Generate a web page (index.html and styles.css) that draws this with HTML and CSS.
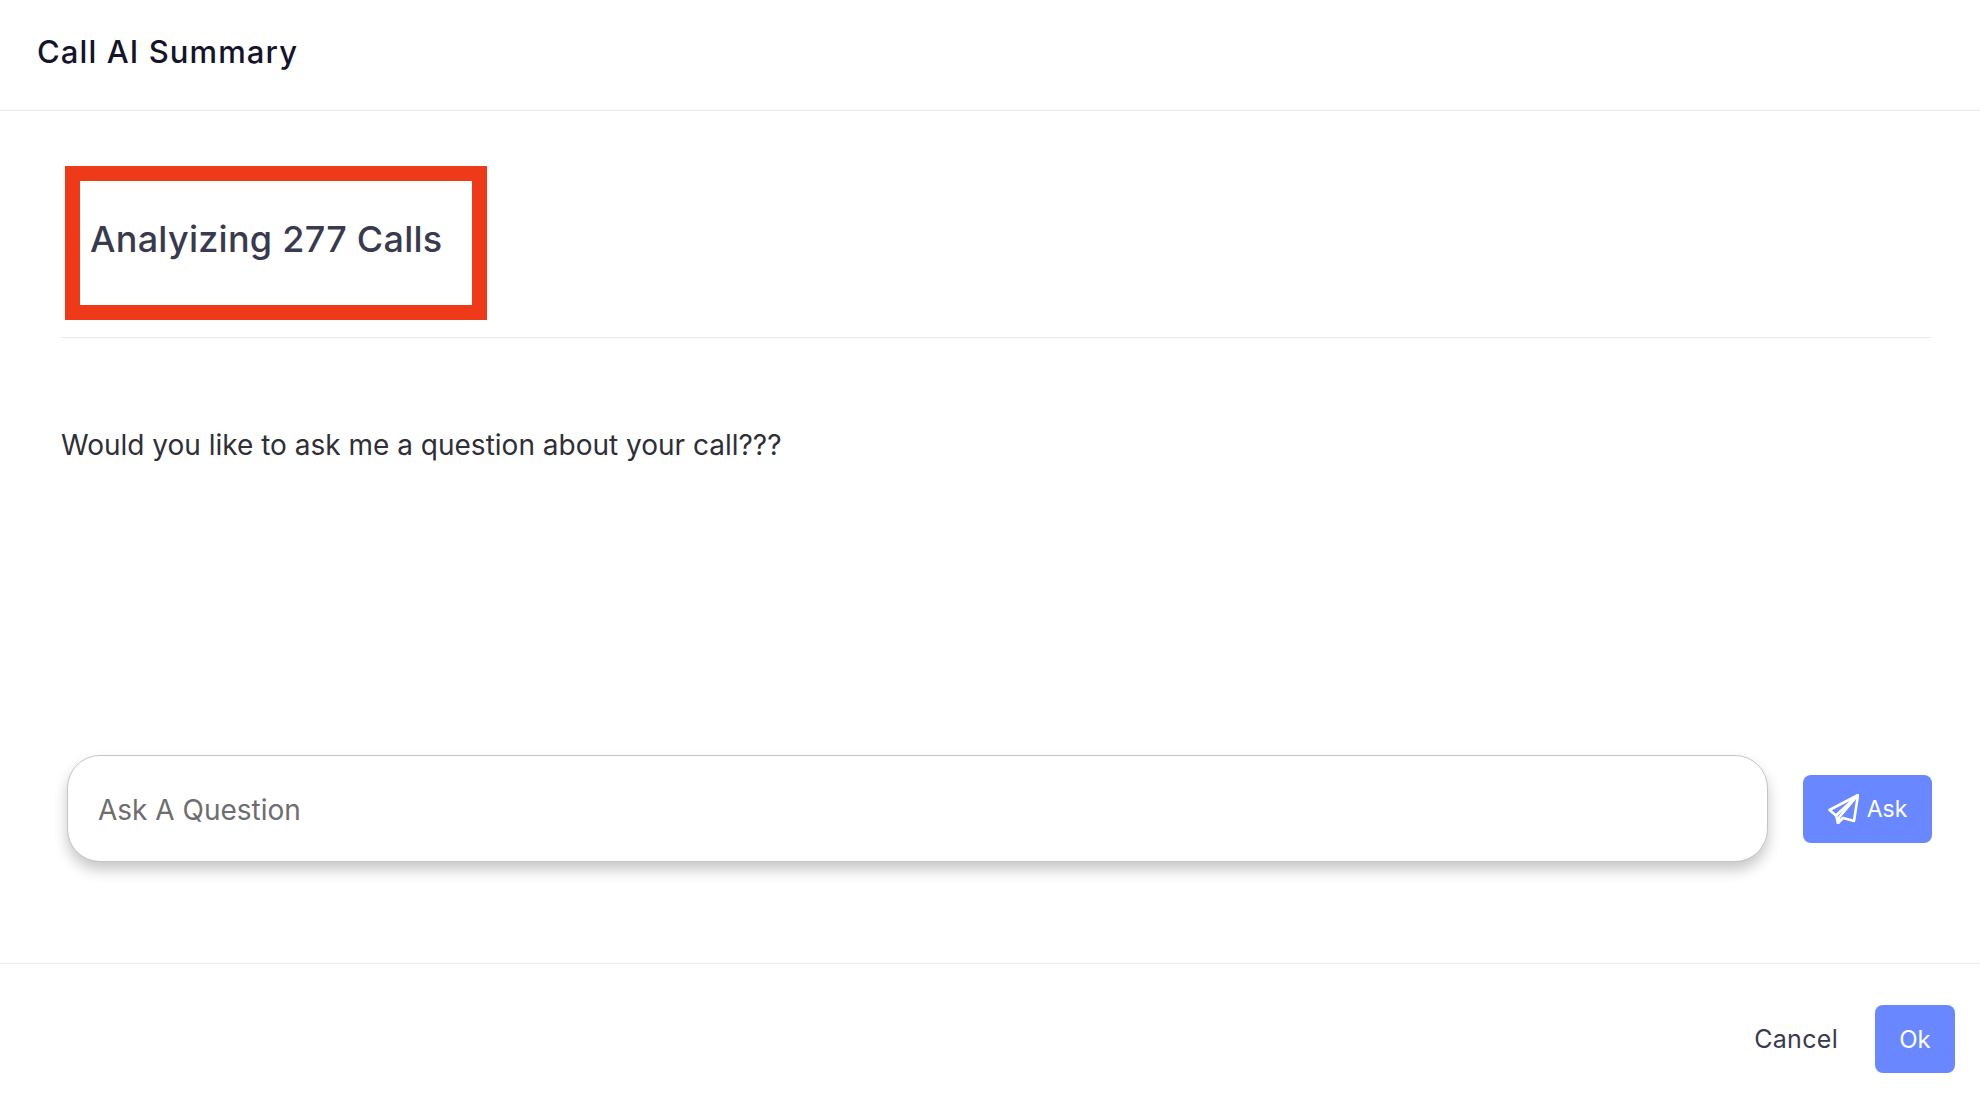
FILE: index.html
```html
<!DOCTYPE html>
<html lang="en">
<head>
	<meta charset="UTF-8">
	<title>Call AI Summary</title>
	<link rel="stylesheet" href="styles.css">
</head>
<body>
	<div class="modal">
		<div class="modal-header">Call AI Summary</div>
		<div class="modal-body">
			<div class="analyze">
				<div class="analyze-box">Analyizing 277 Calls</div>
			</div>
			<p class="prompt">Would you like to ask me a question about your call???</p>
			<div class="ask-row">
				<input class="ask-input" type="text" placeholder="Ask A Question">
				<button class="btn ask-btn">
					<svg class="ask-icon" viewBox="0 0 31 30" fill="none" stroke="#fff" stroke-width="2.6" stroke-linejoin="round" stroke-linecap="round">
						<path d="M30 1 1.5 16 8 21.5 10 29 15 24 26 27Z"/>
						<path d="M30 1 8 21.5M30 1 11 23.5 10 29"/>
					</svg>
					Ask
				</button>
			</div>
		</div>
		<div class="modal-footer">
			<button class="btn-plain">Cancel</button>
			<button class="btn ok-btn">Ok</button>
		</div>
	</div>
</body>
</html>
```
FILE: styles.css
```css
*{
	box-sizing: border-box;
}
body{
	margin: 0;
	background: #fff;
	font-family: "Inter", "Liberation Sans", sans-serif;
}
.modal{
	display: flex;
	flex-direction: column;
	height: 1100px;
}
.modal-header{
	height: 111px;
	padding: 0 37px 8px;
	display: flex;
	align-items: center;
	border-bottom: 1px solid #ebebeb;
	font-size: 31px;
	font-weight: 500;
	letter-spacing: 1.1px;
	color: #14142b;
}
.modal-body{
	flex: 1;
	padding: 55px 48px 0 60px;
	display: flex;
	flex-direction: column;
}
.analyze{
	padding: 0 0 17px 5px;
	border-bottom: 1px solid #ebebeb;
}
.analyze-box{
	width: 422px;
	height: 154px;
	border: 15px solid #ef3a19;
	padding: 0 0 8px 10px;
	display: flex;
	align-items: center;
	font-size: 36px;
	font-weight: 500;
	letter-spacing: 0.25px;
	color: #3a3a4e;
}
.prompt{
	margin: 87px 0 0 1px;
	font-size: 28px;
	line-height: 40px;
	color: #2f2f38;
}
.ask-row{
	margin-top: 290px;
	display: flex;
	align-items: center;
	justify-content: space-between;
	padding-left: 7px;
}
.ask-input{
	width: 1701px;
	height: 107px;
	border: 1px solid #c4c4c4;
	border-radius: 33px;
	padding: 2px 30px 0;
	font: 28px "Inter", "Liberation Sans", sans-serif;
	outline: none;
	box-shadow: 0 8px 14px rgba(0,0,0,0.22);
}
.ask-input::placeholder{
	color: #6e6e6e;
	opacity: 1;
}
.btn{
	border: 0;
	background: #6988ff;
	color: #fff;
	border-radius: 8px;
	font-family: "Inter", "Liberation Sans", sans-serif;
	display: flex;
	align-items: center;
	justify-content: center;
}
.ask-btn{
	width: 129px;
	height: 68px;
	gap: 8px;
	font-size: 23px;
}
.ask-icon{
	width: 31px;
	height: 30px;
}
.modal-footer{
	height: 137px;
	border-top: 1px solid #ebebeb;
	padding: 41px 25px 0 0;
	display: flex;
	justify-content: flex-end;
	align-items: flex-start;
	gap: 37px;
}
.btn-plain{
	border: 0;
	background: none;
	padding: 0;
	height: 68px;
	font: 25px "Inter", "Liberation Sans", sans-serif;
	letter-spacing: 0.3px;
	color: #3a3a4e;
}
.ok-btn{
	width: 80px;
	height: 68px;
	font-size: 24px;
}
```
